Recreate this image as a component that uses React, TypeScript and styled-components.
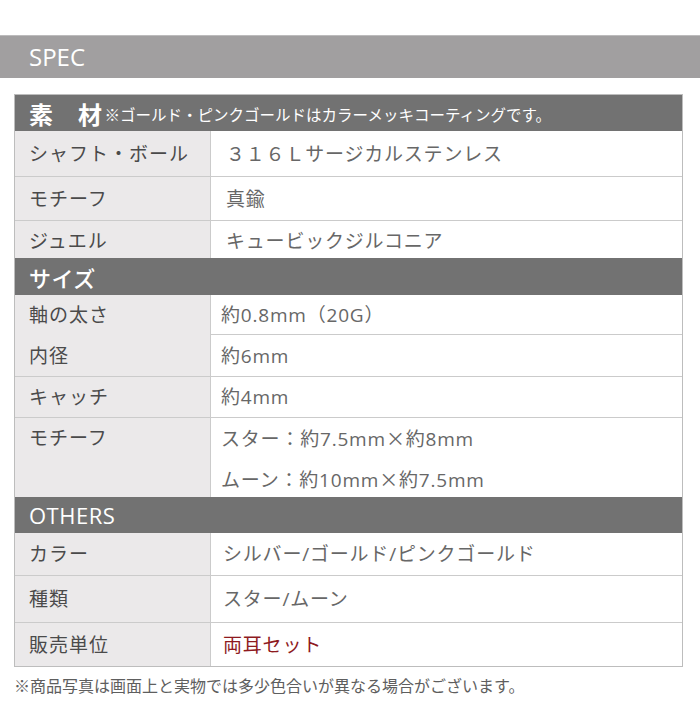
import React from "react";
import styled, { createGlobalStyle } from "styled-components";

const Global = createGlobalStyle`
  html, body { margin: 0; padding: 0; background: #ffffff; }
  body { font-family: "Open Sans", "Noto Sans CJK JP", sans-serif; }
`;

const Page = styled.div`
  width: 700px;
  padding-top: 35px;
  box-sizing: border-box;
`;

const SpecBar = styled.h1`
  margin: 0;
  height: 43px;
  box-sizing: border-box;
  background: #a19fa0;
  border-top: 1px solid #bcbbbc;
  color: #ffffff;
  font-family: "Open Sans", "Noto Sans CJK JP", sans-serif;
  font-weight: 400;
  font-size: 24px;
  line-height: 41px;
  padding-left: 29px;
`;

const Table = styled.div`
  margin: 16px 0 0 14px;
  width: 669px;
  box-sizing: border-box;
  border: 1px solid #bdbdbd;
  display: flex;
  flex-direction: column;
`;

const SectionHeader = styled.div<{ $h: number }>`
  height: ${(p) => p.$h}px;
  box-sizing: border-box;
  background: #727272;
  color: #ffffff;
  display: flex;
  align-items: center;
  gap: 2px;
  padding-left: 14px;
`;

const HeaderTitle = styled.span<{ $size: number; $weight: number }>`
  font-family: "Open Sans", "Noto Sans CJK JP", sans-serif;
  font-size: ${(p) => p.$size}px;
  font-weight: ${(p) => p.$weight};
  letter-spacing: 0.5px;
  white-space: pre;
`;

const HeaderNote = styled.span`
  font-family: "Noto Sans CJK JP", sans-serif;
  font-size: 15.5px;
  font-weight: 400;
  padding-top: 2px;
`;

const Row = styled.div<{ $h: number; $last?: boolean }>`
  display: grid;
  grid-template-columns: 196px 1fr;
  height: ${(p) => p.$h}px;
  box-sizing: border-box;
  border-bottom: ${(p) => (p.$last ? "none" : "1px solid #cbcbcb")};
`;

const Label = styled.div<{ $top?: boolean }>`
  background: #ebe9ea;
  border-right: 1px solid #cbcbcb;
  box-sizing: border-box;
  padding-left: 14px;
  display: flex;
  align-items: ${(p) => (p.$top ? "flex-start" : "center")};
  line-height: 40px;
  color: #4a4a4a;
  font-family: "Open Sans", "Noto Sans CJK JP", sans-serif;
  font-size: 19px;
  letter-spacing: 1px;
`;

const Value = styled.div<{ $indent: number; $multi?: boolean }>`
  padding-left: ${(p) => p.$indent}px;
  display: flex;
  flex-direction: column;
  justify-content: ${(p) => (p.$multi ? "flex-start" : "center")};
  color: #676767;
  font-family: "Open Sans", "Noto Sans CJK JP", sans-serif;
  font-size: 19px;
  letter-spacing: 0.8px;
`;

const ValueLine = styled.div<{ $accent?: boolean }>`
  line-height: 40px;
  color: ${(p) => (p.$accent ? "#8e1a1e" : "inherit")};
`;

const Cross = styled.span`
  font-family: "Noto Sans CJK JP", sans-serif;
`;

const Footnote = styled.p`
  margin: 8px 0 0 14px;
  font-family: "Noto Sans CJK JP", sans-serif;
  font-size: 16px;
  line-height: 20px;
  color: #5e5e5e;
`;

type RowData = { label: string; values: string[]; h: number; accent?: boolean };
type Section = {
  title: string;
  titleSize: number;
  titleWeight: number;
  note?: string;
  h: number;
  indent: number;
  rows: RowData[];
};

const sections: Section[] = [
  {
    title: "素\u3000材",
    titleSize: 24,
    titleWeight: 700,
    note: "※ゴールド・ピンクゴールドはカラーメッキコーティングです。",
    h: 36,
    indent: 15,
    rows: [
      { label: "シャフト・ボール", values: ["３１６Ｌサージカルステンレス"], h: 46 },
      { label: "モチーフ", values: ["真鍮"], h: 44 },
      { label: "ジュエル", values: ["キュービックジルコニア"], h: 37 },
    ],
  },
  {
    title: "サイズ",
    titleSize: 22,
    titleWeight: 500,
    h: 37,
    indent: 10,
    rows: [
      { label: "軸の太さ", values: ["約0.8mm（20G）"], h: 40 },
      { label: "内径", values: ["約6mm"], h: 42 },
      { label: "キャッチ", values: ["約4mm"], h: 41 },
      { label: "モチーフ", values: ["スター：約7.5mm×約8mm", "ムーン：約10mm×約7.5mm"], h: 79 },
    ],
  },
  {
    title: "OTHERS",
    titleSize: 22,
    titleWeight: 400,
    h: 36,
    indent: 12,
    rows: [
      { label: "カラー", values: ["シルバー/ゴールド/ピンクゴールド"], h: 43 },
      { label: "種類", values: ["スター/ムーン"], h: 47 },
      { label: "販売単位", values: ["両耳セット"], h: 43, accent: true },
    ],
  },
];

function renderValue(v: string) {
  const parts = v.split("×");
  return parts.map((part, i) => (
    <React.Fragment key={i}>
      {i > 0 && <Cross>×</Cross>}
      {part}
    </React.Fragment>
  ));
}

export default function App() {
  return (
    <>
      <Global />
      <Page>
        <SpecBar>SPEC</SpecBar>
        <Table>
          {sections.map((s, si) => (
            <React.Fragment key={s.title}>
              <SectionHeader $h={s.h}>
                <HeaderTitle $size={s.titleSize} $weight={s.titleWeight}>
                  {s.title}
                </HeaderTitle>
                {s.note && <HeaderNote>{s.note}</HeaderNote>}
              </SectionHeader>
              {s.rows.map((r, ri) => {
                const multi = r.values.length > 1;
                const lastInSection = ri === s.rows.length - 1;
                return (
                  <Row key={r.label + ri} $h={r.h} $last={lastInSection}>
                    <Label $top={multi}>{r.label}</Label>
                    <Value $indent={s.indent} $multi={multi}>
                      {r.values.map((v) => (
                        <ValueLine key={v} $accent={r.accent}>
                          {renderValue(v)}
                        </ValueLine>
                      ))}
                    </Value>
                  </Row>
                );
              })}
            </React.Fragment>
          ))}
        </Table>
        <Footnote>※商品写真は画面上と実物では多少色合いが異なる場合がございます。</Footnote>
      </Page>
    </>
  );
}
